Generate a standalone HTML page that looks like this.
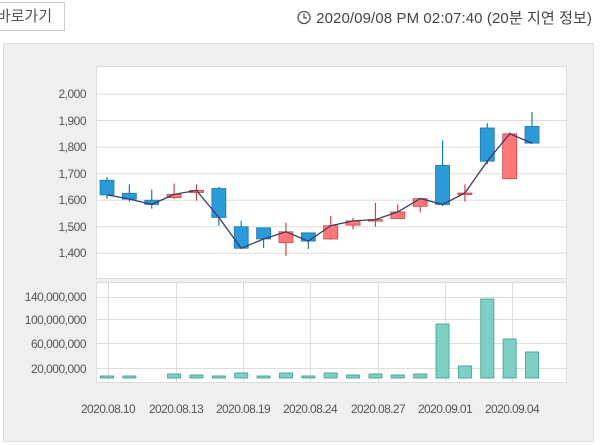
<!DOCTYPE html>
<html><head><meta charset="utf-8"><style>
body{margin:0;width:600px;height:445px;background:#fff;overflow:hidden;font-family:"Liberation Sans","Noto Sans CJK KR",sans-serif;position:relative}
.btn{position:absolute;left:-2px;top:2px;width:67px;height:29px;border:1px solid #ccc;box-sizing:border-box;font-size:15px;color:#555;line-height:27px;white-space:nowrap;overflow:hidden}
.btn span{position:absolute;right:12px;top:0}
.ts{position:absolute;right:8px;top:7px;font-size:15px;color:#444;letter-spacing:0.1px;white-space:nowrap}
</style></head><body>
<div class="btn"><span>바로가기</span></div>
<svg style="position:absolute;left:297px;top:10px" width="15" height="15"><circle cx="7" cy="7.5" r="6" fill="none" stroke="#555" stroke-width="1.3"/><path d="M7 3.5V8H10" fill="none" stroke="#555" stroke-width="1.3"/></svg>
<div class="ts">2020/09/08 PM 02:07:40 (20분 지연 정보)</div>
<svg id="c" style="position:absolute;left:0;top:0" width="600" height="445" font-family="Liberation Sans, sans-serif" font-size="12" fill="#555">
<rect x="3.5" y="43.5" width="590" height="398" fill="#efefef" stroke="#ddd"/>
<rect x="96.5" y="66.5" width="470" height="212" fill="#fff" stroke="#ddd"/>
<rect x="96.5" y="282.5" width="470" height="100" fill="#fff" stroke="#ddd"/>
<g text-anchor="end" letter-spacing="-0.5">
<text x="86" y="98">2,000</text><text x="86" y="125">1,900</text><text x="86" y="151">1,800</text><text x="86" y="178">1,700</text><text x="86" y="204">1,600</text><text x="86" y="231">1,500</text><text x="86" y="257">1,400</text>
<text x="86" y="301">140,000,000</text><text x="86" y="324">100,000,000</text><text x="86" y="348">60,000,000</text><text x="86" y="373">20,000,000</text>
</g>
<g text-anchor="middle" letter-spacing="-0.6">
<text x="108" y="413">2020.08.10</text><text x="176" y="413">2020.08.13</text><text x="243" y="413">2020.08.19</text><text x="310" y="413">2020.08.24</text><text x="378" y="413">2020.08.27</text><text x="445" y="413">2020.09.01</text><text x="512" y="413">2020.09.04</text>
</g>
<g id="g"></g>
</svg>
<script>
var g=document.getElementById('g'),h='';
function y(p){return 94+(2000-p)*0.2655}
for(var v=2000;v>=1400;v-=100)h+='<line x1="97" x2="566" y1="'+y(v).toFixed(1)+'" y2="'+y(v).toFixed(1)+'" stroke="#ddd"/>';
[297,319,343,368].forEach(function(t){h+='<line x1="97" x2="566" y1="'+t+'.5" y2="'+t+'.5" stroke="#ddd"/>'});
[108,176,243,310,378,445,512].forEach(function(t){h+='<line y1="283" y2="382" x1="'+t+'.5" x2="'+t+'.5" stroke="#ddd"/>'});
var d=[[1675,1620,1687,1606],[1626,1604,1660,1595],[1600,1584,1640,1568],[1610,1622,1663,1605],[1629,1637,1660,1598],[1644,1535,1650,1504],[1500,1419,1522,1417],[1496,1454,1496,1420],[1440,1481,1515,1390],[1477,1446,1477,1416],[1454,1504,1540,1451],[1506,1522,1533,1490],[1524,1527,1590,1500],[1531,1556,1584,1531],[1577,1606,1609,1554],[1731,1584,1825,1577],[1625,1627,1660,1595],[1872,1747,1890,1735],[1681,1850,1856,1678],[1878,1815,1932,1812]];
var pts=[];
d.forEach(function(c,i){var x=107+i*22.37,up=c[1]>c[0],col=up?'#f77':'#2a9ad8',sc=up?'#c44':'#1b78b0';
h+='<line x1="'+x+'" x2="'+x+'" y1="'+y(c[2])+'" y2="'+y(c[3])+'" stroke="'+sc+'" stroke-width="1.2"/>';
var t=y(Math.max(c[0],c[1])),b=y(Math.min(c[0],c[1]));if(b-t<1.5){b=t+1.5}
h+='<rect x="'+(x-7)+'" y="'+t+'" width="14" height="'+(b-t)+'" fill="'+col+'" stroke="'+sc+'" stroke-width="0.8"/>';
pts.push(x.toFixed(1)+','+y(c[1]).toFixed(1));});
h+='<polyline points="'+pts.join(' ')+'" fill="none" stroke="#3a3d6a" stroke-width="1.3"/>';
var vt=[376,376,null,374,375,376,373,376,373,376,373,375,374,375,374,324,366,299,339,352];
vt.forEach(function(t,i){if(t==null)return;var x=107+i*22.37;
h+='<rect x="'+(x-6.5)+'" y="'+t+'" width="13" height="'+(378-t)+'" fill="#7fd0c4" stroke="#4fa89a" stroke-width="1"/>';});
g.innerHTML=h;
</script>
</body></html>
